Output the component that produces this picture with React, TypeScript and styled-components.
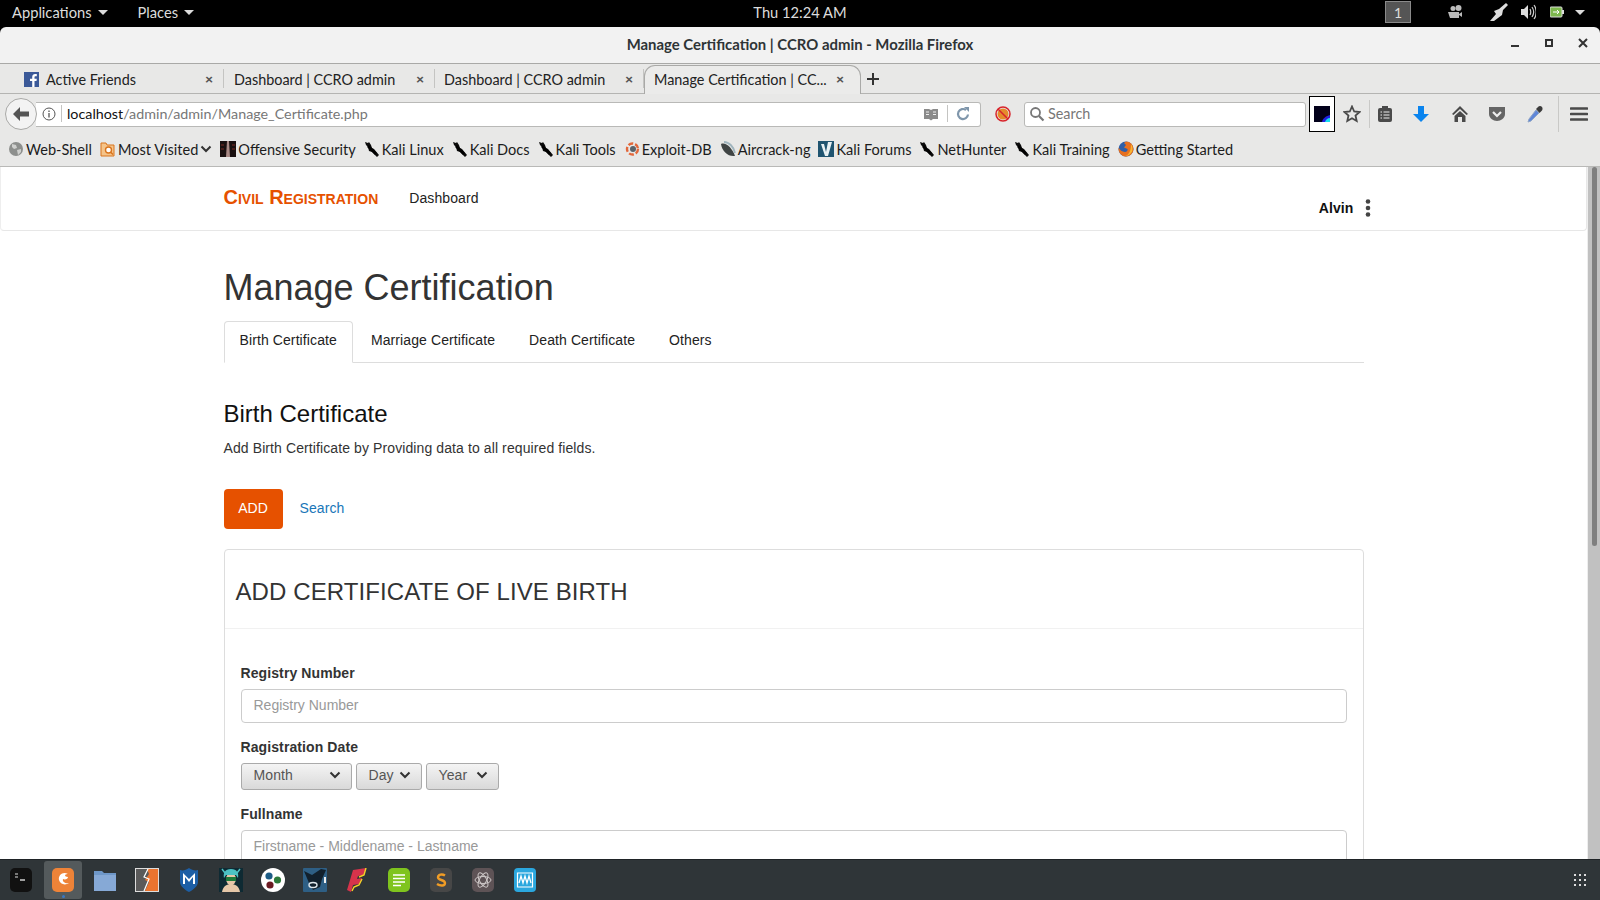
import React from 'react';
import styled, { createGlobalStyle } from 'styled-components';

const GlobalStyle = createGlobalStyle`
  html, body {
    margin: 0;
    padding: 0;
    height: 100%;
    overflow: hidden;
    background: #000;
  }
  * { box-sizing: border-box; }
`;

const uiFont = `Lato, "Open Sans", sans-serif`;
const webFont = `"Liberation Sans", Arial, sans-serif`;

const Screen = styled.div`
  display: flex;
  flex-direction: column;
  width: 1600px;
  height: 900px;
  overflow: hidden;
  font-family: ${uiFont};
`;

/* gnome top bar */
const TopBar = styled.div`
  display: grid;
  grid-template-columns: 1fr auto 1fr;
  align-items: center;
  height: 27px;
  flex: none;
  padding-bottom: 3px;
  background: #000;
  color: #dcdcdc;
  font-size: 14.7px;
`;
const TopLeft = styled.div`
  display: flex;
  padding-left: 12px;
  gap: 30px;
`;
const TopMenu = styled.span`
  display: flex;
  align-items: center;
  gap: 6px;
`;
const Caret = styled.i`
  width: 0;
  height: 0;
  border-left: 5px solid transparent;
  border-right: 5px solid transparent;
  border-top: 5px solid #dcdcdc;
`;
const TopRight = styled.div`
  display: flex;
  align-items: center;
  justify-content: flex-end;
  padding-right: 15px;
`;
const Workspace = styled.span`
  display: flex;
  align-items: center;
  justify-content: center;
  width: 26px;
  height: 22px;
  margin-right: 36px;
  background: #555;
  border: 1px solid #8a8a8a;
  color: #ddd;
  font-size: 14px;
`;
const TrayGap = styled.span<{ $w: number }>`
  display: flex;
  margin-right: ${({ $w }) => $w}px;
`;

/* firefox window */
const Window = styled.div`
  display: flex;
  flex-direction: column;
  flex: 1;
  min-height: 0;
`;
const TitleBar = styled.div`
  position: relative;
  display: flex;
  align-items: center;
  justify-content: center;
  height: 37px;
  flex: none;
  padding-bottom: 2px;
  background: #f2f2f2;
  border-radius: 6px 6px 0 0;
  border-bottom: 1px solid #a9a9a7;
  color: #2e3436;
  font-size: 14.9px;
  font-weight: 700;
`;
const WindowControls = styled.div`
  position: absolute;
  right: 12px;
  top: 11px;
  display: flex;
  align-items: center;
  gap: 24px;
`;
const TabStrip = styled.div`
  display: flex;
  align-items: stretch;
  height: 30px;
  flex: none;
  background: #e8e8e7;
  border-bottom: 1px solid #b4b4b2;
  color: #222;
  font-size: 14.4px;
`;
const Tab = styled.div<{ $w: number; $pad: number; $active?: boolean }>`
  display: flex;
  align-items: center;
  flex: none;
  width: ${({ $w }) => $w}px;
  padding-left: ${({ $pad }) => $pad}px;
  padding-right: ${({ $active }) => ($active ? 16 : 10)}px;
  padding-top: ${({ $active }) => ($active ? 0 : 1)}px;
  padding-bottom: ${({ $active }) => ($active ? 2 : 0)}px;
  gap: 6px;
  margin: ${({ $active }) => ($active ? '1px 0 -1px 0' : '5px 0 5px 0')};
  background: ${({ $active }) => ($active ? '#ebebea' : 'transparent')};
  border-right: ${({ $active }) => ($active ? '1px solid #a9a9a7' : '1px solid #c4c4c2')};
  border-left: ${({ $active }) => ($active ? '1px solid #a9a9a7' : 'none')};
  border-top: ${({ $active }) => ($active ? '1px solid #a9a9a7' : 'none')};
  border-radius: ${({ $active }) => ($active ? '11px 11px 0 0' : '0')};
`;
const TabLabel = styled.span`
  flex: 1;
  white-space: nowrap;
`;
const TabClose = styled.span`
  flex: none;
  color: #555;
  font-size: 14px;
  font-weight: 900;
  line-height: 1;
`;
const NewTab = styled.span`
  display: flex;
  align-items: center;
  padding-left: 5px;
  color: #333;
`;

const NavBar = styled.div`
  position: relative;
  display: flex;
  align-items: center;
  height: 42px;
  flex: none;
  padding: 0 0 2px 36px;
  background: #e8e8e7;
`;
const BackButton = styled.span`
  position: absolute;
  left: 5px;
  top: 4px;
  display: flex;
  align-items: center;
  justify-content: center;
  width: 32px;
  height: 32px;
  border-radius: 50%;
  background: #f3f3f3;
  border: 1px solid #a9a9a7;
`;
const UrlBar = styled.div`
  display: flex;
  align-items: center;
  flex: none;
  width: 945px;
  height: 25px;
  padding: 0 0 1px 6px;
  background: #fff;
  border: 1px solid #b9b9b7;
  border-left: none;
  border-radius: 0 3px 3px 0;
  font-size: 14.3px;
`;
const UrlDivider = styled.span<{ $m?: number }>`
  flex: none;
  width: 1px;
  height: 17px;
  margin: 0 ${({ $m }) => $m ?? 5}px;
  background: #c4c4c2;
`;
const UrlHost = styled.span`
  color: #111;
`;
const UrlPath = styled.span`
  flex: 1;
  color: #777;
`;
const SearchBox = styled.div`
  display: flex;
  align-items: center;
  flex: none;
  gap: 3px;
  width: 282px;
  height: 25px;
  padding: 0 0 1px 4px;
  background: #fff;
  border: 1px solid #b9b9b7;
  border-radius: 3px;
  color: #777;
  font-size: 14.4px;
`;
const BlockedSlot = styled.span`
  display: flex;
  justify-content: center;
  flex: none;
  width: 43px;
`;
const ExtensionBox = styled.span`
  display: flex;
  align-items: center;
  justify-content: center;
  flex: none;
  width: 26px;
  height: 36px;
  margin-left: 3px;
  background: #fff;
  border: 1px solid #000;
`;
const ToolIcon = styled.span<{ $w: number }>`
  display: flex;
  justify-content: center;
  flex: none;
  width: ${({ $w }) => $w}px;
`;
const ToolDivider = styled.span<{ $h: number }>`
  flex: none;
  width: 1px;
  height: ${({ $h }) => $h}px;
  background: #c9c9c7;
`;

const Bookmarks = styled.div`
  display: flex;
  align-items: center;
  height: 31px;
  flex: none;
  padding: 0 0 4px 8px;
  gap: 8px;
  background: #e8e8e7;
  border-bottom: 1px solid #b9b9b7;
  color: #1c1c1c;
  font-size: 14.55px;
`;
const Bookmark = styled.span`
  display: flex;
  align-items: center;
  gap: 2px;
  white-space: nowrap;
`;

/* page */
const Viewport = styled.div`
  display: flex;
  flex: 1;
  min-height: 0;
  background: #fff;
`;
const Page = styled.div`
  flex: 1;
  min-width: 0;
  overflow: hidden;
  font-family: ${webFont};
  font-size: 14px;
  line-height: 20px;
  letter-spacing: 0.1px;
  color: #333;
`;
const SiteNav = styled.nav`
  height: 64px;
  border: 1px solid #e7e7e7;
  border-top: none;
  border-left-color: #eee;
  border-radius: 0 0 4px 4px;
`;
const Container = styled.div`
  width: 1140px;
  margin: 0 auto;
`;
const NavInner = styled(Container)`
  display: flex;
  padding-top: 20px;
`;
const Brand = styled.a`
  font-size: 20px;
  font-weight: 700;
  font-variant: small-caps;
  letter-spacing: 0;
  color: #e65100;
`;
const NavLink = styled.a`
  margin: 1px 0 0 31px;
  color: #222;
`;
const NavUser = styled.div`
  display: flex;
  align-items: center;
  gap: 11px;
  margin: 11px -7px 0 auto;
  color: #111;
  font-weight: 700;
`;
const Heading = styled.h1`
  margin: 37px 0 13px;
  font-size: 36px;
  font-weight: 400;
  line-height: 40px;
  letter-spacing: 0;
  color: #333;
`;
const Tabs = styled.ul`
  display: flex;
  gap: 2px;
  margin: 0;
  padding: 0;
  list-style: none;
  border-bottom: 1px solid #ddd;
`;
const TabItem = styled.li<{ $active?: boolean }>`
  margin-bottom: -1px;
  padding: 8px 15px 12px;
  border: 1px solid ${({ $active }) => ($active ? '#ddd' : 'transparent')};
  border-bottom-color: ${({ $active }) => ($active ? '#fff' : 'transparent')};
  border-radius: 4px 4px 0 0;
  background: ${({ $active }) => ($active ? '#fff' : 'transparent')};
  color: #222;
`;
const SectionTitle = styled.h3`
  margin: 37px 0 11px;
  font-size: 24px;
  font-weight: 400;
  line-height: 27px;
  letter-spacing: 0;
  color: #111;
`;
const Lead = styled.p`
  margin: 0 0 31px;
`;
const Actions = styled.div`
  display: flex;
  align-items: center;
  gap: 17px;
  margin-bottom: 20px;
`;
const AddButton = styled.button`
  width: 59px;
  height: 40px;
  padding: 0 0 2px;
  border: none;
  border-radius: 4px;
  background: #e65100;
  color: #fff;
  font: 14px ${webFont};
`;
const SearchLink = styled.a`
  margin-top: -2px;
  color: #1976b8;
`;
const Card = styled.section`
  border: 1px solid #ddd;
  border-radius: 4px;
`;
const CardHeader = styled.div`
  height: 79px;
  padding: 29px 11px 0;
  border-bottom: 1px solid #f1f1f1;
`;
const CardTitle = styled.h2`
  margin: 0;
  font-size: 24px;
  font-weight: 400;
  line-height: 26px;
  color: #333;
`;
const CardBody = styled.div`
  padding: 34px 16px 0;
`;
const Field = styled.div`
  margin-bottom: 14px;
`;
const Label = styled.label`
  display: block;
  margin-bottom: 6px;
  font-weight: 700;
`;
const Input = styled.input`
  display: block;
  width: 100%;
  height: 34px;
  padding: 5px 12px 7px;
  border: 1px solid #ccc;
  border-radius: 4px;
  background: #fff;
  font: 14px ${webFont};
  &::placeholder {
    color: #999;
    opacity: 1;
  }
`;
const DateRow = styled.div`
  display: flex;
  gap: 4px;
  margin: 5px 0 14px;
`;
const DateSelect = styled.div<{ $w: number }>`
  display: flex;
  align-items: center;
  justify-content: space-between;
  width: ${({ $w }) => $w}px;
  height: 27px;
  padding: 0 10px 3px 12px;
  border: 1px solid #aaa;
  border-radius: 3px;
  background: linear-gradient(#f4f4f4, #d9d9d9);
  color: #555;
`;
const Scrollbar = styled.div`
  flex: none;
  width: 13px;
  padding: 0 3px 0 4px;
  background: #c1c1c1;
  border-left: 1px solid #eee;
`;
const ScrollThumb = styled.div`
  height: 379px;
  border-radius: 4px;
  background: #7f7f7f;
`;

/* dock */
const Dock = styled.div`
  display: flex;
  align-items: center;
  height: 41px;
  flex: none;
  background: #2f3538;
  border-top: 1px solid #1f2326;
`;
const DockItem = styled.span<{ $active?: boolean }>`
  position: relative;
  display: flex;
  align-items: center;
  justify-content: center;
  width: 38px;
  height: 38px;
  margin: 0 2px;
  border-radius: 3px;
  background: ${({ $active }) => ($active ? '#545a5c' : 'transparent')};
  ${({ $active }) =>
    $active &&
    `&::after {
      content: '';
      position: absolute;
      bottom: 1px;
      left: 18px;
      width: 3px;
      height: 3px;
      border-radius: 50%;
      background: #3a78c4;
    }`}
`;
const DockGrid = styled.span`
  display: flex;
  margin-left: auto;
  padding-right: 13px;
`;

const Ico = ({ w = 16, h = 16, children }: { w?: number; h?: number; children: React.ReactNode }) => (
  <svg width={w} height={h} viewBox={`0 0 ${w} ${h}`} style={{ flex: 'none', display: 'block' }}>
    {children}
  </svg>
);

const Chevron = ({ color = '#333' }: { color?: string }) => (
  <Ico w={12} h={8}>
    <path d="M1.500 1.500 6 6l4.500-4.500" fill="none" stroke={color} strokeWidth="2" />
  </Ico>
);

const KaliDragon = () => (
  <Ico>
    <path d="M1 1l3 1 1-1 2 3 1 3 2 1 5 6-2 2-5-5-3-1-1-4-2-2z" fill="#0c0c0c" />
    <path d="M4 5l8 8" stroke="#000" strokeWidth="2.600" />
  </Ico>
);

const bookmarks: { label: string; icon: React.ReactNode }[] = [
  {
    label: 'Web-Shell',
    icon: (
      <Ico>
        <circle cx="8" cy="8" r="7" fill="#8d8f8d" />
        <path d="M4 3l4 1 1 3-3 1-2-2zM9 9l4-1 0 3-3 3z" fill="#cfd0ce" />
      </Ico>
    ),
  },
  {
    label: 'Most Visited',
    icon: (
      <Ico>
        <path d="M1 2h5l1 2h7v11H1z" fill="#f5c48a" stroke="#d9741d" />
        <circle cx="8.500" cy="9" r="3" fill="#fff" stroke="#d9741d" strokeWidth="1.400" />
        <path d="M10.500 11l2.500 2.500" stroke="#d9741d" strokeWidth="1.500" />
      </Ico>
    ),
  },
  {
    label: 'Offensive Security',
    icon: (
      <Ico>
        <rect width="16" height="16" fill="#1a1010" />
        <path d="M7 0h2l1 16H6z" fill="#a98a86" />
        <path d="M1 4h3M1 8h3M12 4h3M12 8h3" stroke="#7b2a22" />
      </Ico>
    ),
  },
  { label: 'Kali Linux', icon: <KaliDragon /> },
  { label: 'Kali Docs', icon: <KaliDragon /> },
  { label: 'Kali Tools', icon: <KaliDragon /> },
  {
    label: 'Exploit-DB',
    icon: (
      <Ico>
        <circle cx="8.500" cy="8" r="5.500" fill="none" stroke="#e2673a" strokeWidth="2.400" strokeDasharray="5 2" />
        <circle cx="9" cy="8" r="3" fill="#59636b" />
      </Ico>
    ),
  },
  {
    label: 'Aircrack-ng',
    icon: (
      <Ico>
        <path d="M1 3c5-2 11 4 14 12-7 1-13-5-14-12z" fill="#3f4444" />
        <path d="M4 1c5 0 10 5 11 11" fill="none" stroke="#9fb4bd" strokeWidth="1.800" />
      </Ico>
    ),
  },
  {
    label: 'Kali Forums',
    icon: (
      <Ico>
        <rect width="16" height="16" fill="#1f5470" />
        <path d="M3 3h3l2 8 2-10h4l-4 14H7z" fill="#e8f1f4" />
      </Ico>
    ),
  },
  { label: 'NetHunter', icon: <KaliDragon /> },
  { label: 'Kali Training', icon: <KaliDragon /> },
  {
    label: 'Getting Started',
    icon: (
      <Ico>
        <circle cx="8" cy="8" r="7.500" fill="#2f5fa8" />
        <path d="M8 .5a7.500 7.500 0 1 1-7.400 6.300C2 9 4 11 7 11c2 0 3-1.500 2.500-3L6 6.500 8 4 6 2z" fill="#e8701f" />
        <path d="M13 3c2 3 2 7 0 9-1 1-3 3-6 3 4-1 6-5 6-12z" fill="#f7b733" />
      </Ico>
    ),
  },
];

const dockIcons: React.ReactNode[] = [
  <Ico w={24} h={24} key="term">
    <rect width="22" height="24" x="1" rx="5" fill="#111" />
    <path d="M6 6h3M6 9h3" stroke="#ddd" />
    <path d="M11 12h5" stroke="#ddd" strokeWidth="1.400" />
  </Ico>,
  <Ico w={24} h={24} key="ff">
    <rect width="22" height="24" x="1" rx="5" fill="#ee8338" />
    <path d="M17 6c-5-3-10 1-9 6 1 4 6 6 10 3-3 1-7-1-6-4 2 1 5 0 5-2-2 0-3-1-3-2 1-1 2-1 3-1z" fill="#fff" />
  </Ico>,
  <Ico w={24} h={24} key="folder">
    <path d="M1 3h8l2 2h12v18H1z" fill="#6e97c8" />
    <path d="M1 7h22v16H1z" fill="#86a9d6" />
  </Ico>,
  <Ico w={24} h={24} key="burp">
    <rect x=".5" y=".5" width="23" height="23" fill="#5a5a5a" stroke="#ddd" />
    <path d="M12 1h11v22H10l4-9-4-2 4-6z" fill="#ea7430" />
    <path d="M13 1l-4 8 5 2-5 12" fill="none" stroke="#fff" strokeWidth="1.200" />
  </Ico>,
  <Ico w={20} h={24} key="msf">
    <path d="M1 2c3 1 6 0 9-2 3 2 6 3 9 2v12c0 4-5 8-9 10-4-2-9-6-9-10z" fill="#1d5fa6" />
    <path d="M4 16V5l6 6 6-6v11h-2V9l-4 5-4-5v7z" fill="#fff" />
  </Ico>,
  <Ico w={24} h={24} key="anime">
    <rect width="24" height="24" fill="#0e2a33" />
    <path d="M3 24c1-6 5-8 9-8s8 2 9 8z" fill="#e5c7a8" />
    <ellipse cx="12" cy="11" rx="5" ry="6" fill="#e5c7a8" />
    <path d="M5 10C4 5 6 1 12 1s8 4 7 9l-2-3H7z" fill="#4cc2c4" />
    <path d="M3 1l3 4M21 1l-3 4" stroke="#4cc2c4" strokeWidth="1.500" />
    <path d="M7 9h10v4H7z" fill="#1d7a3a" />
  </Ico>,
  <Ico w={24} h={24} key="balls">
    <circle cx="12" cy="12" r="12" fill="#fff" />
    <circle cx="8" cy="8" r="3.600" fill="#1d5c86" />
    <circle cx="16.500" cy="12" r="3.600" fill="#2c7a3a" />
    <circle cx="9" cy="17" r="3.600" fill="#6b1a22" />
  </Ico>,
  <Ico w={24} h={24} key="bull">
    <rect width="24" height="24" rx="1" fill="#2e5f85" />
    <path d="M1 3l8 4 9-6 5 1-4 9-2 8-7 3-4-7z" fill="#12202c" />
    <ellipse cx="10" cy="17" rx="4" ry="2.500" fill="none" stroke="#dfe7ec" strokeWidth="1.400" />
    <path d="M22 9v6" stroke="#eee" strokeWidth="2" />
  </Ico>,
  <Ico w={20} h={24} key="flash">
    <path d="M6 2l13-2-2 7-6 1-1 3 5-1-3 6-6 1-2 7-4-2z" fill="#d6334b" />
    <path d="M19 0l-2 7-5 2M15 11l-3 6-5 2-2 4" fill="none" stroke="#f5d327" strokeWidth="1.400" />
  </Ico>,
  <Ico w={24} h={24} key="notes">
    <rect x="1" width="22" height="24" rx="5" fill="#7fc41e" />
    <path d="M6 7h12M6 10.500h12M6 14h12M6 17.500h8" stroke="#fff" strokeWidth="1.400" />
  </Ico>,
  <Ico w={24} h={24} key="sublime">
    <rect x="1" width="22" height="24" rx="5" fill="#474747" />
    <path d="M16 7.500c-3-2-7-1-7 2s7 2 7 5.500-5 3-8 1" fill="none" stroke="#f19c25" strokeWidth="2.400" />
  </Ico>,
  <Ico w={24} h={24} key="atom">
    <rect x="1" width="22" height="24" rx="5" fill="#5e5356" />
    <g fill="none" stroke="#cfc9c9" strokeWidth="1">
      <ellipse cx="12" cy="12" rx="8" ry="3.500" />
      <ellipse cx="12" cy="12" rx="8" ry="3.500" transform="rotate(60 12 12)" />
      <ellipse cx="12" cy="12" rx="8" ry="3.500" transform="rotate(120 12 12)" />
    </g>
  </Ico>,
  <Ico w={24} h={24} key="monitor">
    <rect x="1" width="22" height="24" rx="4" fill="#2ba7de" />
    <path d="M4.500 5h15v14h-15z" fill="none" stroke="#fff" strokeWidth="1.200" />
    <path d="M6 15l2-7 2 7 2-7 2 7 2-7 2 7" fill="none" stroke="#fff" strokeWidth="1.300" />
  </Ico>,
];

const App: React.FC = () => {
  return (
    <>
      <GlobalStyle />
      <Screen>
        <TopBar>
          <TopLeft>
            <TopMenu>
              Applications <Caret />
            </TopMenu>
            <TopMenu>
              Places <Caret />
            </TopMenu>
          </TopLeft>
          <span>Thu 12:24 AM</span>
          <TopRight>
            <Workspace>1</Workspace>
            <TrayGap $w={27}>
              <Ico>
                <circle cx="6" cy="4.500" r="2.500" fill="#bbb" />
                <circle cx="11.500" cy="4" r="3" fill="#bbb" />
                <path d="M1 8h11v6H3zM12 10l3-2v5l-3-2z" fill="#bbb" />
              </Ico>
            </TrayGap>
            <TrayGap $w={12}>
              <Ico w={18} h={18}>
                <path d="M16 0l2 2-5 5-1 5-8 6-4 0 6-7-2-3 5-2z" fill="#ddd" />
              </Ico>
            </TrayGap>
            <TrayGap $w={14}>
              <Ico>
                <path d="M1 5h3l4-4v14l-4-4H1z" fill="#ddd" />
                <path d="M10 5c1 2 1 4 0 6M12 3c2 3 2 7 0 10M14 1c3 4 3 10 0 14" fill="none" stroke="#ccc" strokeWidth="1.200" />
              </Ico>
            </TrayGap>
            <TrayGap $w={11}>
              <Ico w={14} h={12}>
                <rect x="0" y="1" width="12" height="10" rx="1" fill="#7db84d" stroke="#ddd" />
                <path d="M3 6h6M7 4l2 2-2 2" stroke="#fff" fill="none" />
                <rect x="12" y="4" width="2" height="4" fill="#ddd" />
              </Ico>
            </TrayGap>
            <Caret />
          </TopRight>
        </TopBar>

        <Window>
          <TitleBar>
            Manage Certification | CCRO admin - Mozilla Firefox
            <WindowControls>
              <Ico w={10} h={10}>
                <rect x="1" y="7" width="8" height="2" fill="#333" />
              </Ico>
              <Ico w={10} h={10}>
                <rect x="2" y="2" width="6" height="6" fill="none" stroke="#333" strokeWidth="2" />
              </Ico>
              <Ico w={10} h={10}>
                <path d="M1 1l8 8M9 1 1 9" stroke="#333" strokeWidth="2" />
              </Ico>
            </WindowControls>
          </TitleBar>

          <TabStrip>
            <Tab $w={224} $pad={24}>
              <Ico w={16} h={16}>
                <rect y="1" width="15" height="15" fill="#3b5998" />
                <path d="M10.500 16v-6h2l.3-2.300h-2.300V6.300c0-.7.2-1.100 1.200-1.100h1.100V3.100c-.3 0-.9-.1-1.700-.1-1.700 0-2.900 1-2.900 2.900v1.800H6V10h2.200v6z" fill="#fff" />
              </Ico>
              <TabLabel>Active Friends</TabLabel>
              <TabClose>×</TabClose>
            </Tab>
            <Tab $w={211} $pad={10}>
              <TabLabel>Dashboard | CCRO admin</TabLabel>
              <TabClose>×</TabClose>
            </Tab>
            <Tab $w={209} $pad={9}>
              <TabLabel>Dashboard | CCRO admin</TabLabel>
              <TabClose>×</TabClose>
            </Tab>
            <Tab $w={217} $pad={9} $active>
              <TabLabel>Manage Certification | CC...</TabLabel>
              <TabClose>×</TabClose>
            </Tab>
            <NewTab>
              <Ico w={14} h={14}>
                <path d="M7 1v12M1 7h12" stroke="#333" strokeWidth="2" />
              </Ico>
            </NewTab>
          </TabStrip>

          <NavBar>
            <BackButton>
              <Ico w={18} h={18}>
                <path d="M1 9l7-7v4.500h9v5H8V16z" fill="#555" />
              </Ico>
            </BackButton>
            <UrlBar>
              <Ico w={14} h={14}>
                <circle cx="7" cy="7" r="6" fill="none" stroke="#555" />
                <path d="M7 6v4.500M7 3.500v1.500" stroke="#555" strokeWidth="1.300" />
              </Ico>
              <UrlDivider />
              <UrlHost>localhost</UrlHost>
              <UrlPath>/admin/admin/Manage_Certificate.php</UrlPath>
              <Ico w={16} h={14}>
                <path d="M1 2h5l2 1 2-1h5v10h-5l-2 1.500L6 12H1z" fill="#8a8a8a" />
                <path d="M3 5h3M3 7.500h3M10 5h3M10 7.500h3" stroke="#eee" />
              </Ico>
              <UrlDivider $m={8} />
              <Ico w={14} h={14}>
                <path d="M12 7.500a5 5 0 1 1-2-4.500" fill="none" stroke="#7f96ab" strokeWidth="2.200" />
                <path d="M8 0h5v5z" fill="#7f96ab" />
              </Ico>
              <TrayGap $w={10} />
            </UrlBar>
            <BlockedSlot>
              <Ico w={16} h={16}>
                <circle cx="8" cy="8" r="5.500" fill="#e58b2b" />
                <circle cx="8" cy="8" r="7" fill="none" stroke="#d8232a" strokeWidth="1.500" />
                <path d="M3 3l10 10" stroke="#d8232a" strokeWidth="1.500" />
              </Ico>
            </BlockedSlot>
            <SearchBox>
              <Ico w={16} h={16}>
                <circle cx="6.500" cy="6.500" r="4.500" fill="none" stroke="#777" strokeWidth="1.800" />
                <path d="M10 10l4.500 4.500" stroke="#777" strokeWidth="2.200" />
              </Ico>
              Search
            </SearchBox>
            <ExtensionBox>
              <Ico w={16} h={16}>
                <rect width="16" height="16" fill="#02001a" />
                <path d="M8 16c1-4 4-6 8-7v7z" fill="#2020e0" />
                <path d="M11 16c.5-2 2.500-4 5-4v4z" fill="#18e0f0" />
              </Ico>
            </ExtensionBox>
            <ToolIcon $w={34}>
              <Ico w={18} h={18}>
                <path d="M9 1.500l2.200 5 5.300.5-4 3.500 1.200 5.500L9 13.300 4.300 16l1.200-5.500-4-3.500 5.300-.5z" fill="none" stroke="#4a4a4a" strokeWidth="1.800" />
              </Ico>
            </ToolIcon>
            <ToolDivider $h={28} />
            <ToolIcon $w={30}>
              <Ico w={16} h={18}>
                <rect x="1" y="3" width="14" height="14" rx="2" fill="#4a4a4a" />
                <rect x="5" y="1" width="6" height="3" fill="#4a4a4a" />
                <path d="M3.500 7h1.500M3.500 10h1.500M3.500 13h1.500M6.500 7h6M6.500 10h6M6.500 13h6" stroke="#eee" />
              </Ico>
            </ToolIcon>
            <ToolIcon $w={42}>
              <Ico w={18} h={18}>
                <path d="M6 1h6v8h5l-8 8-8-8h5z" fill="#0a84ee" />
              </Ico>
            </ToolIcon>
            <ToolIcon $w={36}>
              <Ico w={18} h={18}>
                <path d="M9 1 1 9l1.500 1L9 4l6.500 6L17 9z" fill="#4a4a4a" />
                <path d="M3.500 11 9 6l5.500 5v6H11v-5H7v5H3.500z" fill="#4a4a4a" />
              </Ico>
            </ToolIcon>
            <ToolIcon $w={38}>
              <Ico w={18} h={18}>
                <path d="M1 2h16v7c0 4-4 7-8 7s-8-3-8-7z" fill="#656565" />
                <path d="M5 7l4 4 4-4" fill="none" stroke="#eee" strokeWidth="2.200" />
              </Ico>
            </ToolIcon>
            <ToolIcon $w={38}>
              <Ico w={18} h={18}>
                <path d="M10 5l3 3-8 8-3 1 1-3z" fill="#5f86d8" stroke="#8fa5c7" />
                <path d="M10 4l2-2c1-1.500 3-1.500 4 0s.5 3-.5 4l-2 2z" fill="#3c3c3c" />
              </Ico>
            </ToolIcon>
            <ToolIcon $w={8}>
              <ToolDivider $h={36} />
            </ToolIcon>
            <ToolIcon $w={34}>
              <Ico w={18} h={16}>
                <path d="M1 2.500h16M1 8h16M1 13.500h16" stroke="#4a4a4a" strokeWidth="2.600" strokeLinecap="round" />
              </Ico>
            </ToolIcon>
          </NavBar>

          <Bookmarks>
            {bookmarks.map(({ label, icon }) => (
              <Bookmark key={label}>
                {icon}
                {label}
                {label === 'Most Visited' && <Chevron />}
              </Bookmark>
            ))}
          </Bookmarks>

          <Viewport>
            <Page>
              <SiteNav>
                <NavInner>
                  <Brand>Civil Registration</Brand>
                  <NavLink>Dashboard</NavLink>
                  <NavUser>
                    Alvin
                    <Ico w={6} h={18}>
                      <circle cx="3" cy="2.500" r="2.300" fill="#444" />
                      <circle cx="3" cy="9" r="2.300" fill="#444" />
                      <circle cx="3" cy="15.500" r="2.300" fill="#444" />
                    </Ico>
                  </NavUser>
                </NavInner>
              </SiteNav>
              <Container>
                <Heading>Manage Certification</Heading>
                <Tabs>
                  <TabItem $active>Birth Certificate</TabItem>
                  <TabItem>Marriage Certificate</TabItem>
                  <TabItem>Death Certificate</TabItem>
                  <TabItem>Others</TabItem>
                </Tabs>
                <SectionTitle>Birth Certificate</SectionTitle>
                <Lead>Add Birth Certificate by Providing data to all required fields.</Lead>
                <Actions>
                  <AddButton>ADD</AddButton>
                  <SearchLink>Search</SearchLink>
                </Actions>
                <Card>
                  <CardHeader>
                    <CardTitle>ADD CERTIFICATE OF LIVE BIRTH</CardTitle>
                  </CardHeader>
                  <CardBody>
                    <Field>
                      <Label>Registry Number</Label>
                      <Input placeholder="Registry Number" />
                    </Field>
                    <Field>
                      <Label>Ragistration Date</Label>
                      <DateRow>
                        <DateSelect $w={111}>
                          Month <Chevron />
                        </DateSelect>
                        <DateSelect $w={66}>
                          Day <Chevron />
                        </DateSelect>
                        <DateSelect $w={73}>
                          Year <Chevron />
                        </DateSelect>
                      </DateRow>
                    </Field>
                    <Field>
                      <Label>Fullname</Label>
                      <Input placeholder="Firstname - Middlename - Lastname" />
                    </Field>
                  </CardBody>
                </Card>
              </Container>
            </Page>
            <Scrollbar>
              <ScrollThumb />
            </Scrollbar>
          </Viewport>
        </Window>

        <Dock>
          {dockIcons.map((icon, i) => (
            <DockItem key={i} $active={i === 1}>
              {icon}
            </DockItem>
          ))}
          <DockGrid>
            <Ico w={14} h={14}>
              <g fill="#ddd">
                {[1, 6, 11].map((y) =>
                  [1, 6, 11].map((x) => <rect key={`${x}-${y}`} x={x} y={y} width="2" height="2" />),
                )}
              </g>
            </Ico>
          </DockGrid>
        </Dock>
      </Screen>
    </>
  );
};

export default App;
